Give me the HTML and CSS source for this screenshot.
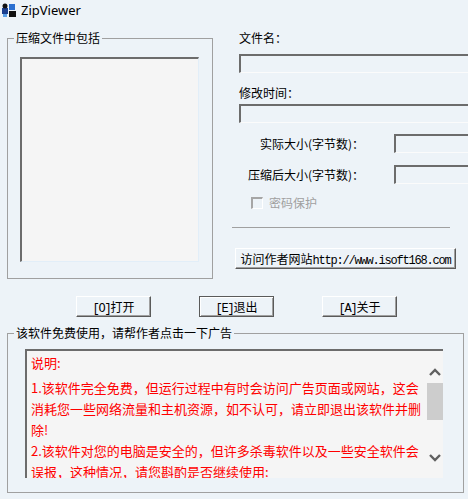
FILE: index.html
```html
<!DOCTYPE html>
<html lang="zh-CN">
<head>
  <meta charset="UTF-8">
  <title>ZipViewer</title>
  <link rel="stylesheet" href="styles.css">
</head>
<body>
<div class="window">

  <!-- Title -->
  <div class="titlebar">
    <svg class="app-icon" width="16" height="16" viewBox="0 0 16 16">
      <rect x="1" y="6" width="6" height="6" fill="#1b3f8f"/>
      <rect x="8" y="2" width="6" height="6" fill="#2a6fd0"/>
      <rect x="8" y="9" width="7" height="6" fill="#111"/>
      <circle cx="4" cy="4" r="2.5" fill="#111"/>
      <rect x="2" y="12" width="4" height="3" fill="#5aa0e8"/>
    </svg>
    <span>ZipViewer</span>
  </div>

  <div class="top">
    <!-- Archive contents -->
    <div class="group files">
      <div class="group-title">压缩文件中包括</div>
      <div class="listbox"></div>
    </div>

    <!-- File info -->
    <div class="info">
      <div class="label first">文件名：</div>
      <div class="field"></div>
      <div class="label second">修改时间：</div>
      <div class="field near"></div>

      <div class="size-row">
        <span class="size-label">实际大小(字节数)：</span>
        <div class="field small"></div>
      </div>
      <div class="size-row">
        <span class="size-label">压缩后大小(字节数)：</span>
        <div class="field small"></div>
      </div>

      <div class="check-row">
        <span class="checkbox"></span>
        <span>密码保护</span>
      </div>

      <div class="sep"></div>
      <button class="btn site-btn">访问作者网站<span class="mono">http://www.isoft168.com</span></button>
    </div>
  </div>

  <!-- Buttons -->
  <div class="actions">
    <button class="btn"><span class="mono">[O]</span>打开</button>
    <button class="btn default"><span class="mono">[E]</span>退出</button>
    <button class="btn"><span class="mono">[A]</span>关于</button>
  </div>

  <!-- Notice -->
  <div class="group notice">
    <div class="group-title">该软件免费使用，请帮作者点击一下广告</div>
    <div class="memo">
      <div class="memo-text">
        <p class="memo-head">说明:</p>
        <p>1.该软件完全免费，但运行过程中有时会访问广告页面或网站，这会<br>消耗您一些网络流量和主机资源，如不认可，请立即退出该软件并删<br>除!</p>
        <p>2.该软件对您的电脑是安全的，但许多杀毒软件以及一些安全软件会<br>误报，这种情况，请您斟酌是否继续使用:</p>
      </div>
      <div class="scrollbar">
        <svg class="arrow" width="16" height="20" viewBox="0 0 16 20">
          <polyline points="3,13 8,8 13,13" fill="none" stroke="#606060" stroke-width="2.4"/>
        </svg>
        <div class="thumb"></div>
        <svg class="arrow down" width="16" height="20" viewBox="0 0 16 20">
          <polyline points="3,8 8,13 13,8" fill="none" stroke="#606060" stroke-width="2.4"/>
        </svg>
      </div>
    </div>
  </div>

</div>
</body>
</html>
```

FILE: styles.css
```css
/* Window */
body {
  margin: 0;
  background: #edf3f8;
  font-family: "Noto Sans CJK SC", sans-serif;
  font-size: 12px;
  color: #000;
  overflow: hidden;
}

.window {
  width: 468px;
  height: 499px;
  overflow: hidden;
}

.titlebar {
  height: 25px;
  display: flex;
  align-items: flex-start;
  gap: 4px;
  padding-left: 1px;
  font-family: "Noto Sans", sans-serif;
  font-size: 13px;
  line-height: 20px;
}

.app-icon {
  margin-top: 2px;
}

/* Group boxes */
.group {
  border: 1px solid #a0a0a0;
  box-sizing: border-box;
}

.group-title {
  width: max-content;
  margin: -8px 0 0 6px;
  padding: 0 2px;
  line-height: 14px;
  background: #edf3f8;
}

.top {
  display: flex;
}

.files {
  margin: 13px 0 0 7px;
  width: 206px;
  height: 241px;
}

.listbox {
  margin: 12px 0 0 12px;
  width: 179px;
  height: 205px;
  box-sizing: border-box;
  background: #f5f5f5;
  border-top: 2px solid #6c6c6c;
  border-left: 2px solid #6c6c6c;
  border-right: 1px solid #e2eef8;
  border-bottom: 1px solid #e2eef8;
}

/* Info column */
.info {
  margin-left: 19px;
  flex: 1;
}

.label {
  line-height: 14px;
  padding-left: 7px;
}

.label.first {
  margin-top: 6px;
}

.label.second {
  margin-top: 13px;
}

.field {
  height: 19px;
  box-sizing: border-box;
  margin: 9px 0 0 7px;
  border-top: 2px solid #6c6c6c;
  border-left: 2px solid #6c6c6c;
  border-bottom: 1px solid #fbfbfb;
}

.field.near {
  margin-top: 4px;
}

.size-row {
  display: flex;
  align-items: center;
  height: 19px;
  margin-top: 11px;
}

.size-row + .size-row {
  margin-top: 12px;
}

.size-label {
  width: 132px;
  text-align: right;
  line-height: 19px;
}

.field.small {
  flex: 1;
  margin: 0 0 0 30px;
}

.check-row {
  display: flex;
  align-items: center;
  gap: 6px;
  margin-top: 12px;
  padding-left: 19px;
  line-height: 14px;
  color: #a0a0a0;
}

.checkbox {
  width: 12px;
  height: 12px;
  box-sizing: border-box;
  border-top: 2px solid #a6a6a6;
  border-left: 2px solid #a6a6a6;
  border-right: 1px solid #fff;
  border-bottom: 1px solid #fff;
}

.sep {
  margin-top: 17px;
  width: 218px;
  height: 1px;
  background: #a0a0a0;
}

/* Buttons */
.btn {
  height: 21px;
  width: 75px;
  padding: 0;
  background: transparent;
  font-family: "Noto Sans CJK SC", sans-serif;
  font-size: 12px;
  line-height: 19px;
  color: #000;
  border: 1px solid;
  border-color: #fff #5a5a5a #5a5a5a #fff;
  box-shadow: inset -1px -1px #a0a0a0;
  white-space: nowrap;
}

.btn.default {
  outline: 1px solid #5a5a5a;
  outline-offset: -1px;
  border-color: #5a5a5a;
  box-shadow: inset 1px 1px #fff, inset -1px -1px #a0a0a0;
}

.site-btn {
  display: block;
  width: 221px;
  margin: 20px 0 0 3px;
}

.mono {
  font-family: "Liberation Mono", monospace;
  font-size: 12px;
  letter-spacing: -1.2px;
}

.actions {
  display: flex;
  gap: 48px;
  margin-top: 17px;
  padding-left: 76px;
}

/* Notice */
.notice {
  margin: 16px 0 0 7px;
  width: 457px;
  height: 160px;
}

.memo {
  display: flex;
  margin: 9px 0 0 17px;
  width: 418px;
  height: 129px;
  box-sizing: border-box;
  overflow: hidden;
  background: #f5f5f5;
  border-top: 2px solid #6c6c6c;
  border-left: 2px solid #6c6c6c;
}

.memo-text {
  flex: 1;
  padding: 1px 0 0 4px;
  color: #f00;
  font-size: 13px;
  line-height: 21px;
  white-space: nowrap;
  overflow: hidden;
}

.memo-text p {
  margin: 0;
}

.memo-head {
  margin-bottom: 4px !important;
}

.scrollbar {
  width: 16px;
  margin-top: 11px;
  display: flex;
  flex-direction: column;
}

.arrow {
  display: block;
}

.thumb {
  margin-top: 1px;
  height: 37px;
  background: #cdcdcd;
}

.arrow.down {
  margin-top: 27px;
}
```
